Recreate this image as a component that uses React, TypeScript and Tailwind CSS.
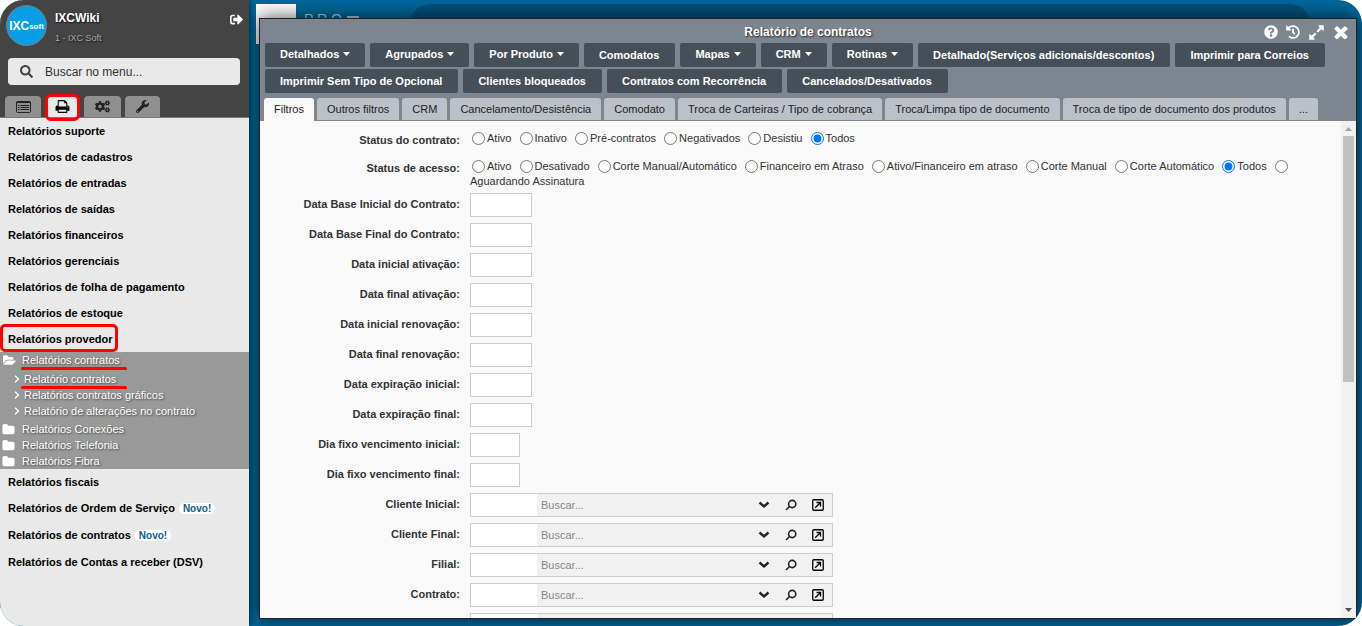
import { FaCogs, FaHistory, FaQuestionCircle, FaSearch, FaSignOutAlt, FaWrench } from "react-icons/fa";

const menuTop = [
  "Relatórios suporte",
  "Relatórios de cadastros",
  "Relatórios de entradas",
  "Relatórios de saídas",
  "Relatórios financeiros",
  "Relatórios gerenciais",
  "Relatórios de folha de pagamento",
  "Relatórios de estoque",
];

const menuBottom = [
  { label: "Relatórios de Ordem de Serviço", isNew: true },
  { label: "Relatórios de contratos", isNew: true },
  { label: "Relatórios de Contas a receber (DSV)", isNew: false },
];

const actionsFirst = [
  { label: "Detalhados", menu: true },
  { label: "Agrupados", menu: true },
  { label: "Por Produto", menu: true },
  { label: "Comodatos", menu: false },
  { label: "Mapas", menu: true },
  { label: "CRM", menu: true },
  { label: "Rotinas", menu: true },
  { label: "Detalhado(Serviços adicionais/descontos)", menu: false },
  { label: "Imprimir para Correios", menu: false },
];

const actionsSecond = [
  { label: "Imprimir Sem Tipo de Opcional", menu: false },
  { label: "Clientes bloqueados", menu: false },
  { label: "Contratos com Recorrência", menu: false },
  { label: "Cancelados/Desativados", menu: false },
];

const tabs = [
  "Filtros",
  "Outros filtros",
  "CRM",
  "Cancelamento/Desistência",
  "Comodato",
  "Troca de Carteiras / Tipo de cobrança",
  "Troca/Limpa tipo de documento",
  "Troca de tipo de documento dos produtos",
  "...",
];

const statusContrato = ["Ativo", "Inativo", "Pré-contratos", "Negativados", "Desistiu", "Todos"];
const statusAcesso = [
  "Ativo",
  "Desativado",
  "Corte Manual/Automático",
  "Financeiro em Atraso",
  "Ativo/Financeiro em atraso",
  "Corte Manual",
  "Corte Automático",
  "Todos",
  "Aguardando Assinatura",
];

const dateFields = [
  "Data Base Inicial do Contrato:",
  "Data Base Final do Contrato:",
  "Data inicial ativação:",
  "Data final ativação:",
  "Data inicial renovação:",
  "Data final renovação:",
  "Data expiração inicial:",
  "Data expiração final:",
];
const dayFields = ["Dia fixo vencimento inicial:", "Dia fixo vencimento final:"];
const lookupFields = ["Cliente Inicial:", "Cliente Final:", "Filial:", "Contrato:"];

function Glyph({ d, box = "0 0 1792 1792", className }: { d: string; box?: string; className: string }) {
  return (
    <svg viewBox={box} fill="currentColor" className={className} aria-hidden="true">
      <path d={d} />
    </svg>
  );
}

const PRINT =
  "M448 1536h896v-256h-896v256zm0-640h896v-384h-160q-40 0-68-28t-28-68v-160h-640v640zm1152 64q0-26-19-45t-45-19-45 19-19 45 19 45 45 19 45-19 19-45zm128 0v416q0 13-9.5 22.5t-22.500 9.500h-224v160q0 40-28 68t-68 28h-960q-40 0-68-28t-28-68v-160h-224q-13 0-22.500-9.500t-9.500-22.500v-416q0-79 56.500-135.500t135.500-56.500h64v-544q0-40 28-68t68-28h672q40 0 88 20t76 48l152 152q28 28 48 76t20 88v256h64q79 0 135.500 56.500t56.500 135.500z";
const EXPAND =
  "M883 1056q0 13-10 23l-332 332 144 144q19 19 19 45t-19 45-45 19h-448q-26 0-45-19t-19-45v-448q0-26 19-45t45-19 45 19l144 144 332-332q10-10 23-10t23 10l114 114q10 10 10 23zm781-864v448q0 26-19 45t-45 19-45-19l-144-144-332 332q-10 10-23 10t-23-10l-114-114q-10-10-10-23t10-23l332-332-144-144q-19-19-19-45t19-45 45-19h448q26 0 45 19t19 45z";
const CLOSE =
  "M1490 1322q0 40-28 68l-136 136q-28 28-68 28t-68-28l-294-294-294 294q-28 28-68 28t-68-28l-136-136q-28-28-28-68t28-68l294-294-294-294q-28-28-28-68t28-68l136-136q28-28 68-28t68 28l294 294 294-294q28-28 68-28t68 28l136 136q28 28 28 68t-28 68l-294 294 294 294q28 28 28 68z";
const FOLDER =
  "M1728 608v704q0 92-66 158t-158 66h-1216q-92 0-158-66t-66-158v-960q0-92 66-158t158-66h320q92 0 158 66t66 158v32h672q92 0 158 66t66 158z";
const FOLDER_OPEN =
  "M1879 952q0 31-31 66l-336 396q-43 51-120.500 86.500t-143.500 35.500h-1088q-34 0-60.500-13t-26.500-43q0-31 31-66l336-396q43-51 120.500-86.500t143.500-35.500h1088q34 0 60.500 13t26.500 43zm-343-344v160h-832q-94 0-197 47.500t-164 119.500l-337 396-5 6q0-4-.5-12.500t-.5-12.500v-960q0-92 66-158t158-66h320q92 0 158 66t66 158v32h544q92 0 158 66t66 158z";

function NavTab({ label, active, width, children }: any) {
  return (
    <button
      aria-label={label}
      className={`relative flex h-[21px] items-center justify-center rounded-t-[4px] ${width} ${active ? "bg-[#e9e9e9] text-black" : "bg-[#8f8f8f] text-[#222]"}`}
    >
      {children}
      {active && <span className="absolute -top-[2px] -left-[2px] h-[27px] w-[35px] rounded-[6px] border-3 border-[#f00]" />}
    </button>
  );
}

function Sidebar() {
  return (
    <aside className="z-10 flex w-[249px] shrink-0 flex-col bg-[#e9e9e9] shadow-[0_0_6px_rgba(0,0,0,0.8)]">
      <header className="h-[118px] border-b border-[#777] bg-[#444]">
        <div className="flex h-[58px] items-start pt-[5px] pl-[6px]">
          <div className="flex size-[41px] items-center justify-center rounded-full border border-[#7c7c7c] bg-[#069fe6] text-white">
            <span className="text-[12px] leading-none font-bold">IXC</span>
            <span className="pt-[2px] text-[8px] leading-none font-bold">soft</span>
          </div>
          <div className="flex-1 pt-[5px] pl-2 [text-shadow:1px_1px_2px_#111]">
            <p className="text-[12px] leading-4 font-bold text-white">IXCWiki</p>
            <p className="pt-[4px] text-[9px] leading-4 text-[#aaa]">1 - IXC Soft</p>
          </div>
          <button aria-label="Sair" className="mt-2 mr-[6px] text-white">
            <FaSignOutAlt className="size-[13px]" />
          </button>
        </div>
        <div className="mr-[9px] ml-2 flex h-[27px] items-center rounded-[4px] bg-[#e9e9e9] pl-3">
          <FaSearch className="size-[13px] shrink-0 text-[#444]" />
          <input
            aria-label="Buscar no menu"
            placeholder="Buscar no menu..."
            className="min-w-0 flex-1 pl-3 text-[12px] outline-none placeholder:text-[#333]"
          />
        </div>
        <nav className="flex items-end pt-[11px] pl-[5px]">
          <NavTab label="Cadastros" width="w-[36px]">
            <svg viewBox="0 0 15 12" className="h-3 w-[15px]" aria-hidden="true">
              <rect x=".5" y=".5" width="14" height="11" rx="1" fill="none" stroke="currentColor" />
              <path d="M0 1.500h15M2 4.500h1.500M2 6.500h1.500M2 8.500h1.500M4.500 4.500H13M4.500 6.500H13M4.500 8.500H13" stroke="currentColor" strokeWidth="1.200" />
            </svg>
          </NavTab>
          <span className="w-[6px]" />
          <NavTab label="Relatórios" width="w-[31px]" active><Glyph d={PRINT} className="size-[15px]" /></NavTab>
          <span className="w-[6px]" />
          <NavTab label="Configurações" width="w-[37px]"><FaCogs className="size-[15px]" /></NavTab>
          <span className="w-[4px]" />
          <NavTab label="Ferramentas" width="w-[35px]"><FaWrench className="size-[13px]" /></NavTab>
        </nav>
      </header>

      <nav className="text-[11px] font-bold text-black">
        {menuTop.map((item) => (
          <a key={item} href="#" className="flex h-[26px] items-center pl-2">{item}</a>
        ))}
        <a href="#" className="relative flex h-[26px] items-center pl-2">
          Relatórios provedor
          <span className="absolute -top-[2px] left-0 h-[28px] w-[118px] rounded-[5px] border-3 border-[#f00]" />
        </a>
        <div className="bg-[#999] text-[11px] leading-4 font-normal text-white [text-shadow:1px_1px_2px_#444]">
          <a href="#" className="relative flex h-4 items-center pl-[3px]">
            <Glyph d={FOLDER_OPEN} box="0 0 1920 1792" className="size-[13px]" />
            <span className="pl-[6px]">Relatórios contratos</span>
            <span className="absolute top-[15px] left-[21px] h-[3px] w-[106px] rounded-full bg-[#f00]" />
          </a>
          <div className="pt-[3px] pb-[2px]">
            {["Relatório contratos", "Relatórios contratos gráficos", "Relatório de alterações no contrato"].map((item, i) => (
              <a key={item} href="#" className="relative flex h-4 items-center pl-[14px]">
                <svg viewBox="0 0 6 8" className="h-2 w-[6px]" fill="none" stroke="currentColor" strokeWidth="1.3" aria-hidden="true">
                  <path d="M1 .7 4.500 4 1 7.300" />
                </svg>
                <span className="pl-1">{item}</span>
                {i === 0 && <span className="absolute top-[15px] left-[21px] h-[3px] w-[106px] rounded-full bg-[#f00]" />}
              </a>
            ))}
          </div>
          {["Relatórios Conexões", "Relatórios Telefonia", "Relatórios Fibra"].map((item) => (
            <a key={item} href="#" className="flex h-4 items-center pl-[2px]">
              <Glyph d={FOLDER} className="size-[13px]" />
              <span className="pl-[7px]">{item}</span>
            </a>
          ))}
        </div>
        <a href="#" className="flex h-[26px] items-center pl-2">Relatórios fiscais</a>
        {menuBottom.map((item) => (
          <a key={item.label} href="#" className="flex h-[27px] items-center pl-2">
            {item.label}
            {item.isNew && (
              <span className="ml-1 rounded-full bg-white px-1 text-[10px] leading-[11px] text-[#0b5c8c]">Novo!</span>
            )}
          </a>
        ))}
      </nav>
    </aside>
  );
}

function ActionButton({ label, menu }: { label: string; menu: boolean }) {
  return (
    <button
      className={`flex h-6 items-center gap-1 rounded-[2px] bg-[#464f58] pl-[15px] text-[11px] font-bold whitespace-nowrap text-white ${menu ? "pr-[15px] pb-[2px]" : "pr-4"}`}
    >
      {label}
      {menu && (
        <svg viewBox="0 0 7 4" className="h-1 w-[7px]" fill="currentColor" aria-hidden="true">
          <path d="M0 0h7L3.500 4z" />
        </svg>
      )}
    </button>
  );
}

function RadioRow({ name, label, options }: { name: string; label: string; options: string[] }) {
  return (
    <fieldset className="flex">
      <legend className="float-left w-[200px] shrink-0 pt-[3px] text-right font-bold">{label}</legend>
      <div className="min-w-0 flex-1 pl-[10px]">
        {options.map((option) => (
          <span key={option}>
            <input
              type="radio"
              id={`${name}-${option}`}
              name={name}
              defaultChecked={option === "Todos"}
              className="mx-[2px] size-[13px] align-middle"
            />
            <label htmlFor={`${name}-${option}`} className="mr-[3px] inline-block align-middle">{option}</label>{" "}
          </span>
        ))}
      </div>
    </fieldset>
  );
}

function TextRow({ label, width }: { label: string; width: string }) {
  return (
    <div className="flex gap-[10px]">
      <label htmlFor={label} className="w-[200px] shrink-0 pt-1 text-right font-bold">{label}</label>
      <input id={label} className={`h-6 border border-[#ccc] bg-white px-1 ${width}`} />
    </div>
  );
}

function LookupRow({ label }: { label: string }) {
  return (
    <div className="flex gap-[10px]">
      <label htmlFor={label} className="w-[200px] shrink-0 pt-1 text-right font-bold">{label}</label>
      <div className="flex h-6 w-[363px] border border-[#ccc] bg-[#f1f1f1] pr-[1px] text-[#222]">
        <input id={label} className="w-[66px] bg-white px-1" />
        <input aria-label={`Buscar ${label}`} placeholder="Buscar..." className="min-w-0 flex-1 px-1 placeholder:text-[#888]" />
        <button type="button" aria-label="Abrir lista" className="flex w-[27px] items-center justify-center">
          <svg viewBox="0 0 12 8" className="h-2 w-3" fill="none" stroke="currentColor" strokeWidth="2.400" aria-hidden="true">
            <path d="M1.500 1.500 6 5.500l4.500-4" />
          </svg>
        </button>
        <button type="button" aria-label="Pesquisar" className="flex w-[27px] items-center justify-center">
          <svg viewBox="0 0 12 12" className="size-3" fill="none" stroke="currentColor" strokeWidth="1.600" aria-hidden="true">
            <circle cx="7.200" cy="5" r="3.600" />
            <path d="M4.500 7.500 1 11" />
          </svg>
        </button>
        <button type="button" aria-label="Abrir cadastro" className="flex w-[27px] items-center justify-center text-black">
          <svg viewBox="0 0 12 12" className="size-3" fill="none" stroke="currentColor" strokeWidth="1.300" aria-hidden="true">
            <rect x=".75" y=".75" width="10.500" height="10.500" rx="1" />
            <path d="M3.200 8.800 8 4M4.500 3.500h4v4" />
          </svg>
        </button>
      </div>
    </div>
  );
}

function ReportWindow() {
  return (
    <section className="relative flex min-h-0 flex-1 flex-col border border-[#222] bg-[#7d868f] shadow-[0_0_18px_rgba(0,0,0,0.7)]">
      <div className="grid h-6 grid-cols-[1fr_auto_1fr] items-center pt-[2px] text-white">
        <h1 className="col-start-2 text-[12px] font-bold [text-shadow:1px_1px_2px_#222]">Relatório de contratos</h1>
        <div className="flex items-center justify-end gap-2 pr-[7px]">
          <button aria-label="Ajuda"><FaQuestionCircle className="size-[14px]" /></button>
          <button aria-label="Histórico"><FaHistory className="size-[14px]" /></button>
          <button aria-label="Maximizar"><Glyph d={EXPAND} className="size-[17px]" /></button>
          <button aria-label="Fechar"><Glyph d={CLOSE} box="256 256 1280 1280" className="mx-[1px] size-[14px]" /></button>
        </div>
      </div>
      <div className="flex flex-col gap-[2px] pl-[5px]">
        <div className="flex gap-[5px]">
          {actionsFirst.map((a) => <ActionButton key={a.label} {...a} />)}
        </div>
        <div className="flex gap-[5px]">
          {actionsSecond.map((a) => <ActionButton key={a.label} {...a} />)}
        </div>
      </div>
      <div role="tablist" className="flex h-[28px] gap-[3px] pt-[5px] pl-[4px]">
        {tabs.map((tab, i) => (
          <button
            key={tab}
            role="tab"
            aria-selected={i === 0}
            className={`rounded-t-[3px] px-[10px] text-[11px] whitespace-nowrap text-[#222] ${i === 0 ? "bg-[#f9f9f9]" : "mb-[1px] bg-[#bcc1c9]"}`}
          >
            {tab}
          </button>
        ))}
      </div>
      <div className="flex min-h-0 flex-1 bg-[#f9f9f9]">
        <form className="min-w-0 flex-1 overflow-hidden pt-[9px] text-[11px] leading-[15px] text-[#333]">
          <RadioRow name="contrato" label="Status do contrato:" options={statusContrato} />
          <div className="h-[10px]" />
          <RadioRow name="acesso" label="Status de acesso:" options={statusAcesso} />
          <div className="flex flex-col gap-[6px] pt-1">
            {dateFields.map((f) => <TextRow key={f} label={f} width="w-[62px]" />)}
            {dayFields.map((f) => <TextRow key={f} label={f} width="w-[50px]" />)}
            {lookupFields.map((f) => <LookupRow key={f} label={f} />)}
            <div className="ml-[210px] flex h-6 w-[363px] border border-[#ccc] bg-[#f1f1f1]">
              <input aria-label="Código" className="w-[66px] bg-white" />
            </div>
          </div>
        </form>
        <div className="flex w-[15px] shrink-0 flex-col items-center bg-[#f1f1f1]">
          <svg viewBox="0 0 15 15" className="size-[15px]" fill="#a3a3a3" aria-hidden="true"><path d="M4 10h7L7.500 6z" /></svg>
          <div className="h-[246px] w-[11px] bg-[#c1c1c1]" />
          <div className="flex-1" />
          <svg viewBox="0 0 15 15" className="size-[15px]" fill="#505050" aria-hidden="true"><path d="M4 5h7L7.500 9z" /></svg>
        </div>
      </div>
    </section>
  );
}

export default function App() {
  return (
    <div className="flex h-screen overflow-hidden rounded-[24px] bg-[#00689c] font-['Liberation_Sans',Arial,sans-serif]">
      <Sidebar />
      <main className="relative flex min-w-0 flex-1 flex-col pt-[18px] pr-[5px] pb-[7px] pl-[10px]">
        <div className="absolute inset-x-0 top-[4px] flex items-start pr-[52px] pl-[7px]">
          <div className="size-10 bg-white" />
          <div className="flex w-[114px] items-start gap-[5px] pt-[7px] pl-2 text-[14px] leading-4 text-[#b4cede]">
            <p>P R O</p>
            <span className="mt-[5px] h-[2px] w-3 bg-[#b4cede]" />
          </div>
          <div className="h-10 flex-1 rounded-[20px] bg-[#00507c]" />
        </div>
        <ReportWindow />
      </main>
    </div>
  );
}
